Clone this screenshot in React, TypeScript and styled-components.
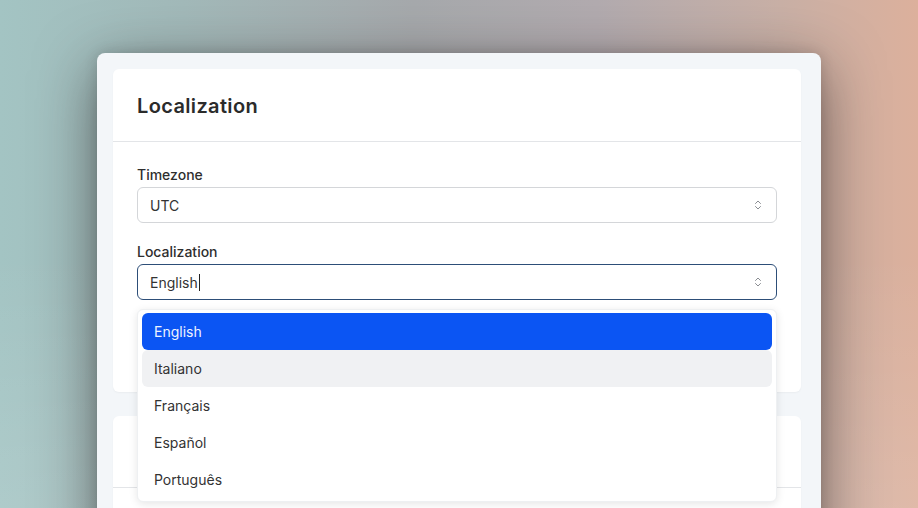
import React from 'react';
import styled, { createGlobalStyle } from 'styled-components';
import { ChevronsUpDown } from 'lucide-react';

const GlobalStyle = createGlobalStyle`
  html, body {
    margin: 0;
    padding: 0;
    height: 100%;
    overflow: hidden;
  }
  body {
    font-family: Inter, "Noto Sans", sans-serif;
    background:
      linear-gradient(180deg, rgba(255,255,255,0) 0%, rgba(255,255,255,0) 50%, rgba(255,255,255,0.12) 100%),
      linear-gradient(90deg, #a3c4c3 0%, #a2b9b9 20%, #a6a9ac 45%, #b2abaf 65%, #c9b0a6 85%, #dcb09c 100%);
  }
`;

const Page = styled.div`
  padding: 53px 0 0 97px;
  height: 508px;
  box-sizing: border-box;
`;

const Window = styled.div`
  width: 724px;
  height: 520px;
  box-sizing: border-box;
  padding: 16px 20px 0 16px;
  background: #f3f6f9;
  border-radius: 8px 8px 0 0;
  box-shadow: 0 16px 60px rgba(30, 20, 20, 0.55), 0 0 14px rgba(0, 0, 0, 0.14);
  display: flex;
  flex-direction: column;
  gap: 24px;
`;

const Card = styled.section`
  background: #fff;
  border-radius: 6px;
  box-shadow: 0 1px 2px rgba(0, 0, 0, 0.04);
  position: relative;
`;

const CardHeader = styled.header<{ $height: number }>`
  box-sizing: border-box;
  height: ${p => p.$height}px;
  display: flex;
  align-items: center;
  padding: 1px 24px 0;
  border-bottom: 1px solid #e3e5e8;
`;

const Title = styled.h2`
  margin: 0;
  font-size: 20px;
  font-weight: 600;
  color: #2b2b2b;
  letter-spacing: 0.35px;
`;

const CardBody = styled.div`
  padding: 23px 24px 92px;
  display: flex;
  flex-direction: column;
  gap: 19px;
`;

const Field = styled.div`
  display: flex;
  flex-direction: column;
  gap: 2px;
  position: relative;
`;

const Label = styled.label`
  font-size: 14px;
  line-height: 20px;
  font-weight: 500;
  color: #2e2e2e;
`;

const SelectBox = styled.div<{ $focused?: boolean }>`
  height: 36px;
  box-sizing: border-box;
  border: 1px solid ${p => (p.$focused ? '#2d4e78' : '#d4d6d9')};
  border-radius: 6px;
  display: flex;
  align-items: center;
  justify-content: space-between;
  padding: 0 12px 0 12px;
  font-size: 14px;
  color: #333;
  background: #fff;
`;

const Value = styled.span`
  display: inline-flex;
  align-items: center;
`;

const Caret = styled.span`
  display: inline-block;
  width: 1px;
  height: 17px;
  background: #222;
  margin-left: 1px;
`;

const Menu = styled.ul`
  position: absolute;
  top: 67px;
  left: 0;
  right: 0;
  margin: 0;
  padding: 3px 4px;
  list-style: none;
  background: #fff;
  border: 1px solid #eef0f2;
  border-radius: 6px;
  box-shadow: 0 2px 8px rgba(0, 0, 0, 0.1);
  z-index: 5;
`;

const Option = styled.li<{ $state?: 'selected' | 'hover' }>`
  height: 37px;
  display: flex;
  align-items: center;
  padding: 0 12px;
  font-size: 14px;
  border-radius: 6px;
  color: ${p => (p.$state === 'selected' ? '#eef3ff' : '#333')};
  background: ${p =>
    p.$state === 'selected' ? '#0b55f3' : p.$state === 'hover' ? '#f0f1f3' : 'transparent'};
`;

const EmptyBody = styled.div`
  height: 60px;
`;

const languages = ['English', 'Italiano', 'Français', 'Español', 'Português'];

export default function App() {
  return (
    <>
      <GlobalStyle />
      <Page>
        <Window>
          <Card>
            <CardHeader $height={73}>
              <Title>Localization</Title>
            </CardHeader>
            <CardBody>
              <Field>
                <Label>Timezone</Label>
                <SelectBox>
                  <Value>UTC</Value>
                  <ChevronsUpDown size={12} color="#8a8d92" strokeWidth={2} />
                </SelectBox>
              </Field>
              <Field>
                <Label>Localization</Label>
                <SelectBox $focused>
                  <Value>
                    English
                    <Caret />
                  </Value>
                  <ChevronsUpDown size={12} color="#8a8d92" strokeWidth={2} />
                </SelectBox>
                <Menu>
                  {languages.map((l, i) => (
                    <Option key={l} $state={i === 0 ? 'selected' : i === 1 ? 'hover' : undefined}>
                      {l}
                    </Option>
                  ))}
                </Menu>
              </Field>
            </CardBody>
          </Card>
          <Card>
            <CardHeader $height={72} />
            <EmptyBody />
          </Card>
        </Window>
      </Page>
    </>
  );
}
